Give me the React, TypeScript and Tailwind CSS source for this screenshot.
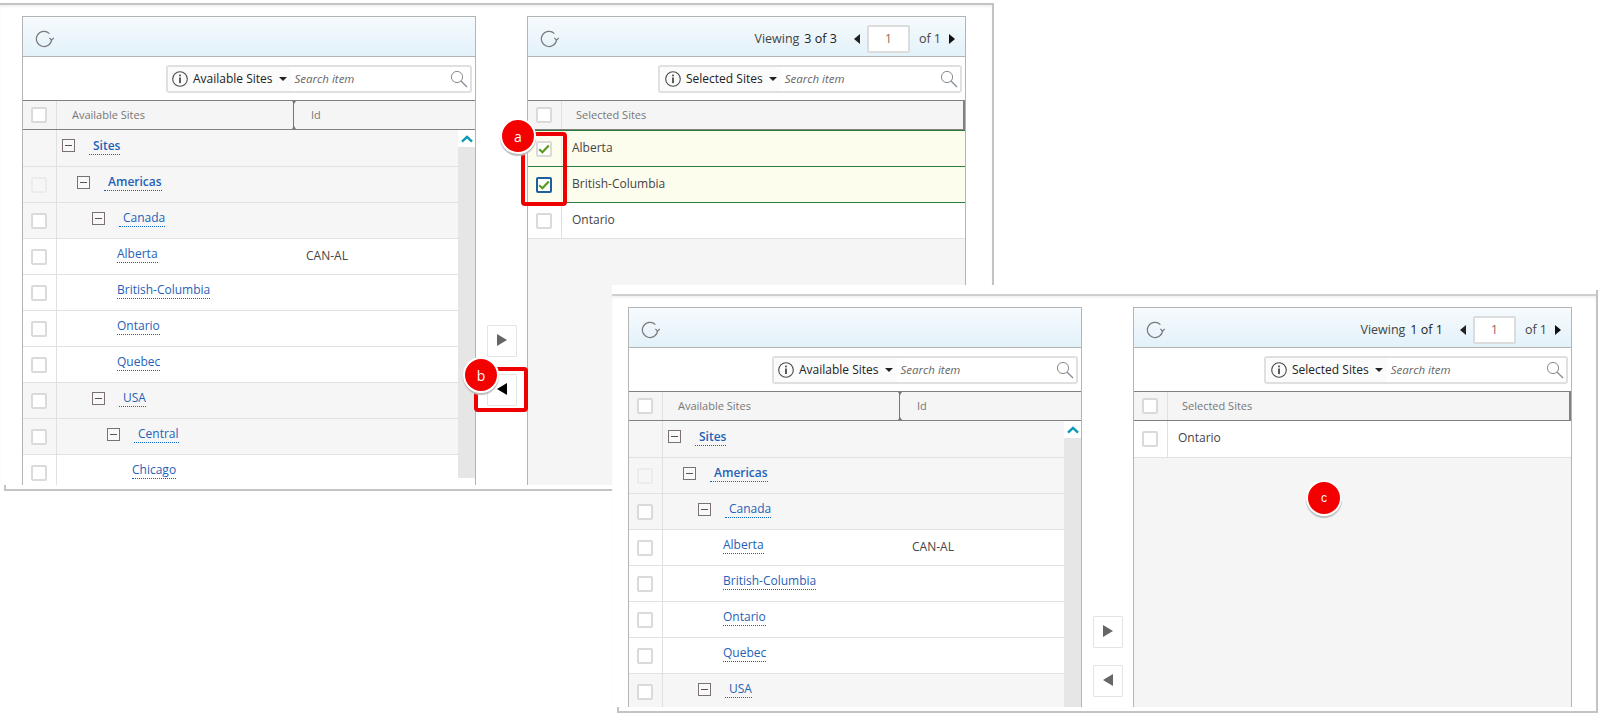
import React from "react";

const font = "[font-family:'Open_Sans','Noto_Sans',sans-serif]";

function Refresh() {
  return (
    <svg width="20" height="18" viewBox="0 0 20 18" fill="none" className="shrink-0">
      <path d="M16.6 9 A7.6 7.6 0 1 1 14.4 3.6" stroke="#7a7a7a" strokeWidth="1.2" />
      <path d="M14.4 7.9 L16.6 10.1 L18.8 7.9" stroke="#7a7a7a" strokeWidth="1.2" />
    </svg>
  );
}

function Info() {
  return (
    <svg width="16" height="16" viewBox="0 0 16 16" fill="none" className="shrink-0">
      <circle cx="8" cy="8" r="7.3" stroke="#4a4a4a" strokeWidth="1.1" />
      <rect x="7.2" y="3.6" width="1.6" height="1.7" fill="#333" />
      <rect x="7.2" y="6.5" width="1.6" height="5.6" fill="#333" />
    </svg>
  );
}

function SearchGlass() {
  return (
    <svg width="18" height="18" viewBox="0 0 18 18" fill="none" className="shrink-0">
      <circle cx="7" cy="7" r="5.6" stroke="#8a8a8a" strokeWidth="1" />
      <path d="M11 11 L17 17" stroke="#7f8c99" strokeWidth="1.2" />
    </svg>
  );
}

function Tri({ dir, cls }: { dir: "l" | "r"; cls: string }) {
  return (
    <svg viewBox="0 0 8 12" preserveAspectRatio="none" className={`shrink-0 ${cls}`}>
      <path d={dir === "l" ? "M8 0 V12 L0 6 Z" : "M0 0 V12 L8 6 Z"} fill="currentColor" />
    </svg>
  );
}

function Check() {
  return (
    <svg width="12" height="10" viewBox="0 0 12 10" fill="none">
      <path d="M1.2 5.2 L4.4 8.2 L10.8 1.4" stroke="#5b9a1f" strokeWidth="2.2" />
    </svg>
  );
}

function Box({ state = "off" }: { state?: "off" | "disabled" | "checked" | "focus" }) {
  const style =
    state === "disabled"
      ? "border-[#ececec] bg-[#f6f6f6]"
      : state === "focus"
        ? "border-[#1f5f9e] bg-white"
        : "border-[#dadada] bg-white";
  return (
    <span className={`ml-[8px] flex h-[16px] w-[16px] shrink-0 items-center justify-center rounded-[2px] border-2 ${style}`}>
      {state === "checked" || state === "focus" ? <Check /> : null}
    </span>
  );
}

function Minus() {
  return (
    <span className="flex h-[13px] w-[13px] shrink-0 items-center justify-center border border-[#7b7078] bg-[#f9f9f9]">
      <span className="h-px w-[7px] bg-[#555]" />
    </span>
  );
}

function SearchBox({ label, boxClass }: { label: string; boxClass: string }) {
  return (
    <div className={`flex h-[28px] items-center rounded-[3px] border-2 border-[#e0e0e0] bg-white ${boxClass}`}>
      <div className="flex h-full items-center bg-[#fbfbfb] pl-[4px] pr-[4px]">
        <Info />
        <span className="ml-[5px] text-[12px] font-medium text-[#222]">{label}</span>
        <svg width="8" height="4" viewBox="0 0 8 4" className="ml-[6px]">
          <path d="M0 0 H8 L4 4 Z" fill="#222" />
        </svg>
      </div>
      <span className="ml-[4px] text-[11.5px] italic text-[#666]">Search item</span>
      <span className="ml-auto mr-[2px] flex">
        <SearchGlass />
      </span>
    </div>
  );
}

function TopBar({ pager }: { pager?: string }) {
  return (
    <div className="flex h-[40px] shrink-0 items-center border-b border-[#b4b4b4] bg-gradient-to-b from-[#f6fbfe] to-[#e3f1f9] pl-[12px] pt-[5px]">
      <Refresh />
      {pager ? (
        <div className="ml-auto flex items-center pr-[10px] text-[12.5px] text-[#444]">
          <span>Viewing</span>
          <span className="ml-[5px] text-[#1a1a1a]">{pager}</span>
          <Tri dir="l" cls="ml-[17px] h-[10px] w-[6px] text-[#222]" />
          <span className="ml-[7px] flex h-[28px] w-[43px] items-center justify-center rounded-[2px] border-2 border-[#dcdcdc] bg-white text-[12px] text-[#8a6a66]">1</span>
          <span className="ml-[9px]">of 1</span>
          <Tri dir="r" cls="ml-[8px] h-[10px] w-[6px] text-[#111]" />
        </div>
      ) : null}
    </div>
  );
}

type Node = {
  label: string;
  indent: string;
  toggle?: boolean;
  bold?: boolean;
  id?: string;
  box?: "none" | "disabled";
};

const tree: Node[] = [
  { label: "Sites", indent: "pl-[5px]", toggle: true, bold: true, box: "none" },
  { label: "Americas", indent: "pl-[20px]", toggle: true, bold: true, box: "disabled" },
  { label: "Canada", indent: "pl-[35px]", toggle: true },
  { label: "Alberta", indent: "pl-[60px]", id: "CAN-AL" },
  { label: "British-Columbia", indent: "pl-[60px]" },
  { label: "Ontario", indent: "pl-[60px]" },
  { label: "Quebec", indent: "pl-[60px]" },
  { label: "USA", indent: "pl-[35px]", toggle: true },
  { label: "Central", indent: "pl-[50px]", toggle: true },
  { label: "Chicago", indent: "pl-[75px]" },
];

function TreeRow({ node, first }: { node: Node; first: boolean }) {
  return (
    <div className={`flex shrink-0 border-b border-[#e1e1e1] ${first ? "h-[37px]" : "h-[36px]"} ${node.toggle ? "bg-[#f6f6f6]" : "bg-white"}`}>
      <div className="flex w-[34px] shrink-0 items-center border-r border-[#e1e1e1]">
        {node.box === "none" ? null : <Box state={node.box === "disabled" ? "disabled" : "off"} />}
      </div>
      <div className={`flex w-[249px] shrink-0 items-center pb-[5px] ${node.indent}`}>
        {node.toggle ? <Minus /> : null}
        <span className={`border-b border-dotted border-[#0a64c4] text-[12px] leading-[17px] text-[#1f62b8] ${node.toggle ? "ml-[14px] pl-[4px]" : ""} ${node.bold ? "font-semibold" : ""}`}>
          {node.label}
        </span>
      </div>
      {node.id ? <div className="mb-[2px] flex items-center text-[12px] text-[#444]">{node.id}</div> : null}
    </div>
  );
}

function AvailablePanel({ heightClass, count }: { heightClass: string; count: number }) {
  return (
    <section className={`flex w-[454px] shrink-0 flex-col overflow-hidden border-x border-t border-[#b4b4b4] bg-white ${heightClass}`}>
      <TopBar />
      <div className="flex h-[43px] shrink-0 items-center justify-end pr-[3px]">
        <SearchBox label="Available Sites" boxClass="w-[306px]" />
      </div>
      <div className="flex h-[30px] shrink-0 border-y border-[#808080] bg-[#f5f5f5] text-[11px] text-[#777]">
        <div className="flex w-[34px] shrink-0 items-center border-r border-[#e1e1e1]">
          <Box />
        </div>
        <div className="relative flex w-[237px] shrink-0 items-center border-r border-[#777] pl-[15px]">
          Available Sites
          <span className="absolute -right-[3px] top-0 h-0 w-0 border-x-[2.5px] border-t-[3px] border-x-transparent border-t-[#777]" />
          <span className="absolute -right-[3px] bottom-0 h-0 w-0 border-x-[2.5px] border-b-[3px] border-x-transparent border-b-[#777]" />
        </div>
        <div className="flex items-center pl-[17px]">Id</div>
      </div>
      <div className="flex min-h-0 flex-1">
        <div className="flex min-w-0 flex-1 flex-col">
          {tree.slice(0, count).map((n, i) => (
            <TreeRow key={n.label} node={n} first={i === 0} />
          ))}
        </div>
        <div className="w-[17px] shrink-0">
          <div className="flex h-[17px] items-center justify-center bg-white">
            <svg width="12" height="8" viewBox="0 0 12 8" fill="none">
              <path d="M1 6.6 L6 1.8 L11 6.6" stroke="#0a9ab8" strokeWidth="2.4" />
            </svg>
          </div>
          <div className="h-[331px] bg-[#e6e6e6]" />
        </div>
      </div>
    </section>
  );
}

type Sel = { label: string; on?: "checked" | "focus" };

function SelectedPanel({ heightClass, pager, rows }: { heightClass: string; pager: string; rows: Sel[] }) {
  return (
    <section className={`flex w-[439px] shrink-0 flex-col overflow-hidden border-x border-t border-[#b4b4b4] bg-[#f5f5f5] ${heightClass}`}>
      <TopBar pager={pager} />
      <div className="flex h-[43px] shrink-0 items-center justify-end bg-white pr-[3px]">
        <SearchBox label="Selected Sites" boxClass="w-[304px] pl-[1px]" />
      </div>
      <div className="flex h-[30px] shrink-0 border-y border-r-2 border-[#808080] bg-[#f5f5f5] text-[11px] text-[#777]">
        <div className="flex w-[34px] shrink-0 items-center border-r border-[#e1e1e1]">
          <Box />
        </div>
        <div className="flex items-center pl-[14px]">Selected Sites</div>
      </div>
      {rows.map((r, i) => (
        <div
          key={r.label}
          className={`flex shrink-0 ${i === 0 ? "h-[37px]" : "h-[36px]"} ${
            r.on
              ? `border-b border-[#2c7d3c] bg-[#fdfdee] ${i === 0 ? "border-t" : ""}`
              : "border-b border-[#e1e1e1] bg-white"
          }`}
        >
          <div className={`flex w-[34px] shrink-0 items-center border-r ${r.on ? "border-[#ecece0]" : "border-[#e1e1e1]"}`}>
            <Box state={r.on ?? "off"} />
          </div>
          <div className="mb-[2px] flex items-center pl-[10px] text-[12px] text-[#444]">{r.label}</div>
        </div>
      ))}
    </section>
  );
}

function MoveButtons({ active }: { active?: boolean }) {
  return (
    <div className="flex w-[51px] shrink-0 flex-col items-center gap-[17px] pt-[309px]">
      <div className="flex h-[32px] w-[30px] items-center justify-center rounded-[1px] border border-[#e4e4e4] bg-white">
        <Tri dir="r" cls="mb-[2px] h-[12px] w-[10px] text-[#666]" />
      </div>
      <div className="flex h-[32px] w-[30px] items-center justify-center rounded-[1px] border border-[#e4e4e4] bg-white">
        <Tri dir="l" cls={`mb-[2px] h-[12px] w-[10px] ${active ? "text-black" : "text-[#666]"}`} />
      </div>
    </div>
  );
}

function Badge({ letter, cls, small }: { letter: string; cls: string; small?: boolean }) {
  return (
    <div
      className={`absolute flex h-[36px] w-[36px] items-center justify-center rounded-full border-2 border-white bg-[#f40000] text-white shadow-[0_2px_1px_#bdbdbd] ${
        small ? "text-[12px] [font-family:'Liberation_Sans',sans-serif]" : "text-[14px]"
      } ${cls}`}
    >
      {letter}
    </div>
  );
}

export default function App() {
  return (
    <div className={`relative h-[724px] w-[1610px] overflow-hidden bg-white pt-[3px] ${font}`}>
      {/* first capture */}
      <div className="h-[488px] w-[994px] border-r-2 border-t-2 border-[#c4c4c4]">
        <div className="flex pl-[22px] pt-[11px] shadow-[inset_0_2px_2px_#f2f2f2]">
          <AvailablePanel heightClass="h-[469px]" count={10} />
          <MoveButtons active />
          <SelectedPanel
            heightClass="h-[469px]"
            pager="3 of 3"
            rows={[{ label: "Alberta", on: "checked" }, { label: "British-Columbia", on: "focus" }, { label: "Ontario" }]}
          />
        </div>
        <div className="ml-[4px] h-[6px] border-b-2 border-l-2 border-[#c4c4c4]" />
      </div>

      {/* second capture, laid over the first */}
      <div className="absolute left-[612px] top-[285px] h-[439px] w-[986px] bg-white pt-[5px]">
        <div className="h-[423px] border-r-2 border-[#c4c4c4] pt-[4px]">
          <div className="border-t-2 border-[#cfcfcf]">
            <div className="flex pl-[16px] pt-[11px] shadow-[inset_0_2px_2px_#f2f2f2]">
              <AvailablePanel heightClass="h-[400px]" count={8} />
              <MoveButtons />
              <SelectedPanel heightClass="h-[400px]" pager="1 of 1" rows={[{ label: "Ontario" }]} />
            </div>
            <div className="ml-[5px] h-[6px] border-b-2 border-l-2 border-[#c4c4c4]" />
          </div>
        </div>
      </div>

      {/* callouts */}
      <div className="absolute left-[521px] top-[132px] h-[74px] w-[46px] rounded-[4px] border-4 border-[#ee0000]" />
      <div className="absolute left-[474px] top-[367px] h-[45px] w-[54px] rounded-[4px] border-4 border-[#ee0000]" />
      <Badge letter="a" cls="left-[500px] top-[118px]" />
      <Badge letter="b" cls="left-[463px] top-[357px]" />
      <Badge letter="c" cls="left-[1306px] top-[480px]" small />
    </div>
  );
}
